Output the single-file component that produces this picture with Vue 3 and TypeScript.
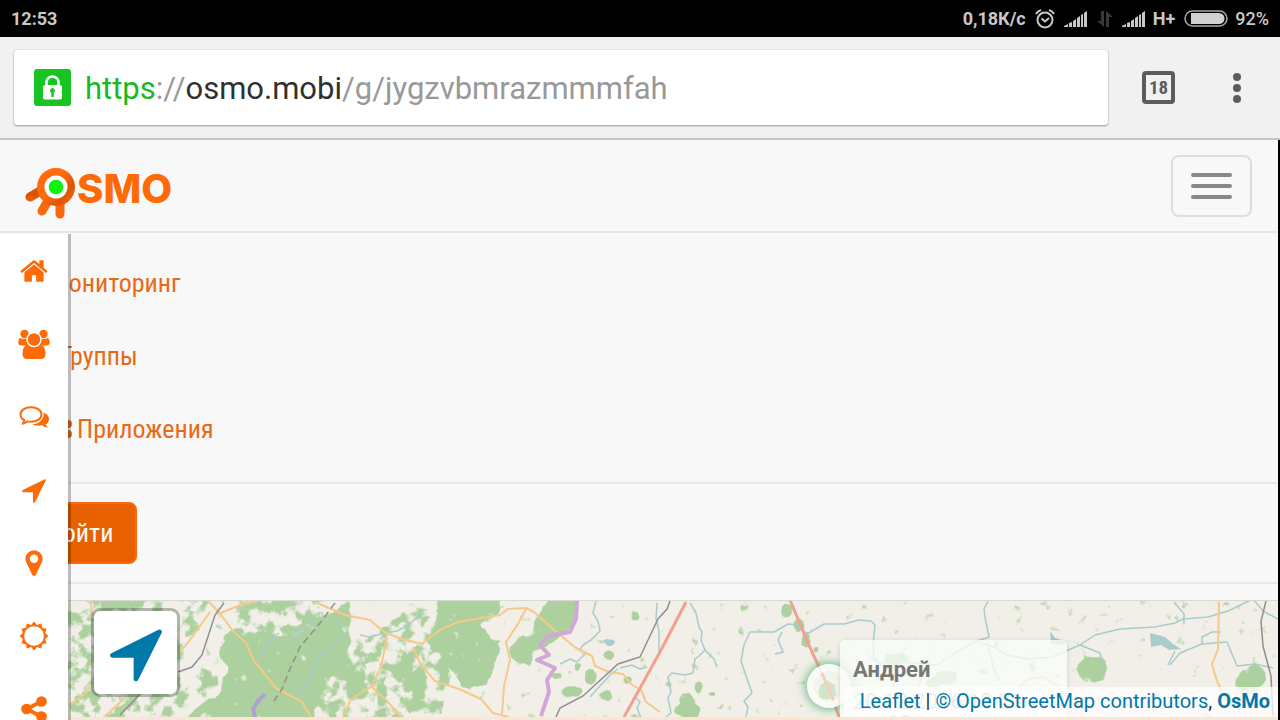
<script setup lang="ts">
interface SideItem {
  label: string
  kind: 'home' | 'users' | 'comments' | 'arrow' | 'marker' | 'sun' | 'share'
}

const sideItems: SideItem[] = [
  { label: 'Главная', kind: 'home' },
  { label: 'Участники', kind: 'users' },
  { label: 'Чат', kind: 'comments' },
  { label: 'Треки', kind: 'arrow' },
  { label: 'Точки', kind: 'marker' },
  { label: 'Настройки', kind: 'sun' },
  { label: 'Поделиться', kind: 'share' },
]

const arrowPath =
  'M1593 349l-640 1280q-17 35-57 35-5 0-15-2-22-5-35.5-22.5t-13.5-39.5v-576h-576q-22 0-39.5-13.5t-22.5-35.5 4-42 29-30l1280-640q13-7 29-7 27 0 45 19 15 14 18.5 34.5t-6.5 39.5z'

const iconPaths: Record<string, string> = {
  home: 'M1472 992v480q0 26-19 45t-45 19h-384v-384h-256v384h-384q-26 0-45-19t-19-45v-480q0-1 .5-3t.5-3l575-474 575 474q1 2 1 6zm223-69l-62 74q-8 9-21 11h-3q-13 0-21-7l-692-577-692 577q-12 8-24 7-13-2-21-11l-62-74q-8-10-7-23.5t11-21.5l719-599q32-26 76-26t76 26l244 204v-195q0-14 9-23t23-9h192q14 0 23 9t9 23v408l219 182q10 8 11 21.5t-7 23.5z',
  arrow: arrowPath,
  marker:
    'M1152 640q0-106-75-181t-181-75-181 75-75 181 75 181 181 75 181-75 75-181zm256 0q0 109-33 179l-364 774q-16 33-47.5 52t-67.5 19-67.5-19-46.5-52l-365-774q-33-70-33-179 0-212 150-362t362-150 362 150 150 362z',
  share:
    'M1344 1024q133 0 226.5 93.5t93.5 226.5-93.5 226.5-226.5 93.5-226.5-93.5-93.5-226.5q0-12 2-34l-360-180q-92 86-218 86-133 0-226.5-93.5t-93.5-226.5 93.5-226.5 226.5-93.5q126 0 218 86l360-180q-2-22-2-34 0-133 93.5-226.5t226.5-93.5 226.5 93.5 93.5 226.5-93.5 226.5-226.5 93.5q-126 0-218-86l-360 180q2 22 2 34t-2 34l360 180q92-86 218-86z',
}

function sunPoints(): string {
  const points: string[] = []
  for (let i = 0; i < 24; i++) {
    const radius = i % 2 === 0 ? 14.5 : 11.5
    const angle = (i * Math.PI) / 12
    points.push(`${(16 + radius * Math.sin(angle)).toFixed(2)},${(16 - radius * Math.cos(angle)).toFixed(2)}`)
  }
  return points.join(' ')
}
const sun = sunPoints()

const groves: number[][] = [
  [556, 676, 6, 4], [609, 655, 7, 4], [590, 676, 5, 9], [578, 667, 3, 5], [573, 691, 10, 5],
  [606, 696, 6, 7], [628, 680, 4, 4], [634, 615, 4, 5], [687, 711, 13, 8], [686, 700, 7, 8],
  [699, 687, 4, 7], [712, 694, 4, 2], [788, 611, 6, 7], [799, 625, 6, 7], [806, 640, 4, 8],
  [816, 650, 3, 3], [827, 690, 8, 10], [1091, 671, 14, 13], [1098, 664, 7, 8], [1253, 677, 14, 11],
  [1243, 683, 8, 7], [896, 659, 13, 6], [946, 677, 12, 7], [934, 683, 8, 5],
]
</script>

<template>
  <div class="screen">
    <header class="status">
      <span>12:53</span>
      <div class="status-right">
        <span>0,18К/с</span>
        <svg width="20" height="20" viewBox="0 0 20 20" fill="none" stroke="#c8c8c8" stroke-width="2">
          <circle cx="10" cy="11" r="7.5" />
          <path d="M6.5 9.5l3.5 3 4-3.5M1 5a8 8 0 0 1 5-4M19 5a8 8 0 0 0-5-4" />
        </svg>
        <svg width="24" height="17" viewBox="0 0 24 17" fill="#c8c8c8">
          <path d="M0 17v-1l4-2v3zM5 17v-4l3-1v5zM9 17V11l3-2v8zM13 17V8l3-2v11zM17 17V5l2-1v13zM20 17V3l3-2v16z" />
        </svg>
        <svg width="16" height="16" viewBox="0 0 16 16" fill="#383838">
          <path d="M4 0h3v16L0 10h4zM9 16V0l7 6h-4v10z" />
        </svg>
        <svg width="24" height="17" viewBox="0 0 24 17" fill="#c8c8c8">
          <path d="M0 17v-1l4-2v3zM5 17v-4l3-1v5zM9 17V11l3-2v8zM13 17V8l3-2v11zM17 17V5l2-1v13zM20 17V3l3-2v16z" />
        </svg>
        <span>H+</span>
        <svg width="44" height="18" viewBox="0 0 44 18">
          <rect x="1" y="1" width="42" height="15" rx="7.5" fill="none" stroke="#a8a8a8" stroke-width="1.5" />
          <path d="M7 3h28a5.500 5.500 0 0 1 0 11H7z" fill="#d0d0d0" />
        </svg>
        <span class="battery">92%</span>
      </div>
    </header>

    <div class="browser">
      <div class="address">
        <svg class="lock" width="37" height="37" viewBox="0 0 37 37">
          <rect width="37" height="37" rx="3" fill="#18c422" />
          <path d="M12.500 18v-4.500a6 6 0 0 1 12 0V18" fill="none" stroke="#fff" stroke-width="2.500" />
          <rect x="9" y="16" width="19" height="14.500" rx="2" fill="#fff" />
          <path d="M18.500 19a2.600 2.600 0 0 1 1.200 4.800V28h-2.400v-4.200A2.600 2.600 0 0 1 18.500 19z" fill="#18c422" />
        </svg>
        <span class="url"><span class="scheme">https</span>://<span class="host">osmo.mobi</span>/g/jygzvbmrazmmmfah</span>
      </div>
      <button class="tabs" type="button" aria-label="Вкладки">18</button>
      <button class="more" type="button" aria-label="Меню">
        <svg width="10" height="32" viewBox="0 0 10 32" fill="#5c5c5c">
          <circle cx="5" cy="5" r="4" /><circle cx="5" cy="16" r="4" /><circle cx="5" cy="27" r="4" />
        </svg>
      </button>
    </div>

    <div class="page">
      <div class="navbar">
        <a class="brand" href="#" aria-label="OsMo">
          <svg width="148" height="56" viewBox="0 0 148 56">
            <defs>
              <linearGradient id="leg" gradientUnits="userSpaceOnUse" x1="0" y1="30" x2="0" y2="50">
                <stop offset="0" stop-color="#d95200" /><stop offset="0.600" stop-color="#fb6a0a" />
              </linearGradient>
              <linearGradient id="ring" x1="0" y1="0" x2="1" y2="0.800">
                <stop offset="0.500" stop-color="#fd6b0b" /><stop offset="0.800" stop-color="#dc5605" />
                <stop offset="1" stop-color="#f7680b" />
              </linearGradient>
            </defs>
            <g stroke="url(#leg)" stroke-width="9" stroke-linecap="round" fill="none">
              <path d="M18 26L6 33" /><path d="M25 35L18 47" /><path d="M36 36L36 50" />
            </g>
            <circle cx="32" cy="23" r="19" fill="url(#ring)" />
            <circle cx="32" cy="23" r="11.500" fill="#fff" />
            <circle cx="32" cy="23" r="7.300" fill="#0cf410" />
            <text x="53" y="39" class="logo-text">SMO</text>
          </svg>
        </a>
        <button class="toggle" type="button" aria-label="Навигация"><i></i><i></i><i></i></button>
      </div>

      <div class="content">
        <nav class="menu">
          <a class="first" href="#">Мониторинг</a>
          <a class="second" href="#">Группы</a>
          <a class="third" href="#">
            <svg width="24" height="20" viewBox="0 0 24 20" fill="none" stroke="#e86a14" stroke-width="4">
              <circle cx="8" cy="11" r="6" /><circle cx="20" cy="5" r="2" /><circle cx="20" cy="15" r="2" />
            </svg>
            Приложения
          </a>
        </nav>
        <div class="login"><button type="button">Войти</button></div>

        <main class="map">
          <svg class="tiles" viewBox="0 600 1278 117" preserveAspectRatio="xMinYMin slice">
            <defs>
              <filter id="woods" x="0" y="590" width="1278" height="130" filterUnits="userSpaceOnUse" color-interpolation-filters="sRGB">
                <feTurbulence type="fractalNoise" baseFrequency="0.080" numOctaves="4" seed="7" result="n" />
                <feGaussianBlur in="SourceGraphic" stdDeviation="1.500" result="s" />
                <feComposite in="s" in2="n" operator="arithmetic" k2="0.600" k3="1" k4="-0.280" />
                <feComponentTransfer result="t"><feFuncA type="linear" slope="6" intercept="-2.600" /></feComponentTransfer>
                <feFlood flood-color="#add19e" />
                <feComposite in2="t" operator="in" />
              </filter>
            </defs>
            <rect y="600" width="1278" height="117" fill="#f1efe8" />
            <g filter="url(#woods)">
              <g opacity="0.450">
                <path d="M60 596H212L200 625 180 650 182 690 140 720H60z" />
                <path d="M218 596H340L300 638 235 625z" />
                <path d="M400 615L450 596 500 650 450 680 440 720H310L330 665z" />
                <path d="M182 690L200 665 225 660 215 690 165 720 140 720z" />
              </g>
              <path d="M105 596h38v12h-38zM220 640l15-12 60 10 25-20 30-16 0 38 -5 20-22 30-14 40H170l25-20 25-18 8-25-10-15z" />
              <path d="M443 596H500L499 615 481 625 501 650 486 685 462 688 448 662 430 645z" />
              <path d="M550 596H578L573 627 555 640 533 652 531 666 512 659 508 648 530 632z" />
              <path d="M340 660l25 3 0 24-12 10-20-12zM390 670l20-15 20 25-15 25z" opacity="0.700" />
              <ellipse v-for="(g, i) in groves" :key="i" :cx="g[0]" :cy="g[1]" :rx="g[2]" :ry="g[3]" />
            </g>

            <g fill="none" stroke="#a9cbcb" stroke-width="1.500" stroke-linejoin="round">
              <path d="M360 635l10 2 15-4 12-2 13-7 12-12M262 653l7-12 10-8M300 694l14-21 3-14 15-12 14-15M315 615l-18 20-7 6" stroke="#a8cdd4" />
              <path d="M596 601l-3 12 5 8 2 10-9 9-8 5-4 6M560 664l10-5 7 3 8-8M657 603l-1 16 3 12 0 24" />
              <path d="M690 603l6 10 3 14 3 5-1 8 4 10-6 6-4 3-2 14-8 2-13-2-4 4 3 15-3 6 3 15-5 4M705 650l9 9 3 8M620 668l12-3 8 4 7-2M590 697l20-22 8-6M635 697l5 5-3 6 4 10" />
              <path d="M746 717l2-10-4-6 8-8-7-20-4-12 3-16 6-13 24 0 14-8 10 1 9 9 17-10 20 0 15-4 12 1 4 4-2 20 1 12 7 9 9 1M782 632l-4 8 5 12-8 2" />
              <path d="M870 657l8 6 22-1 37 3 15-10 22-13 15-5-4-20-1-8 4-8M980 643l10 2 17 10 20 4 25-2 28-12 15-10 25-6 35-2 20-4 8-4 25-2 20-6 25-12 10 12 15 8 9 2 10-2M988 645l6 24 5 10M1174 602l10 12 0 10" />
              <path d="M1170 665l10-12 22-9 25-2 5 12 5 12 18-2 18 4M1202 644l0-7 10-5 9 0M1080 645l20 8 4 13M1175 651l-7 14" />
            </g>
            <path d="M1050 631l5 7 12 4-5 3-11-1zM1150 633l15 4 8 7 8 5-12 1-8-5-10 2zM606 639a5 4 0 1 0 8 1zM978 670l7-2 4 4-7 3zM1029 664l5-2 2 8-5 2z" fill="#a8cccd" />

            <g fill="none" stroke="#f5c98a" stroke-width="2" stroke-linejoin="round">
              <path d="M208 601l10 10 15 20 13 12 8 18 22 27 26 14 10 17M210 612l-20 28-10 12M218 614l20-8 20-5M70 704l15-10 5-8M90 600l3 16M105 716l20-18" />
              <path d="M315 602l30 13 25 5 14 12 15 6 23 6 18-14 18-8 42-7 8-6 18-1 8 4 20 18 22 18 16 8 3 10 14 6 14 2 8 10 10 6 5 12 14 10" />
              <path d="M387 637l-6 30-10 20-20 12-8 18M372 687l15 14 14 16M413 647l8 18 14 16 24 8 22 10 12 14 16 4M526 609l-8 15-12 18 4 18-6 26-2 28" />
              <path d="M1219 602l-1 47-6 15 5 17 10 20M1018 687l10-8 16-2 14 9" />
            </g>
            <g fill="none" stroke="#8f8f8d" stroke-width="1.500">
              <path d="M224 603l-9 12-13 40-10 12-14 5M144 690l-24 25M670 601l-3 8-9 10-18 38-22 7-35 32-23 12-4 9M1266 601l-5 20 2 25 8 30 2 40" />
              <path d="M335 603l-15 20-20 24-10 22-8 20-8 12" stroke-dasharray="7 4" />
            </g>
            <path d="M577 601l-1 18-6 13-22 4-8 9 9 10-12 5 18 8-8 12 2 12-8 24" fill="none" stroke="#d3a6d8" stroke-width="4" stroke-linejoin="round" />
            <path d="M265 694l-7 7-5 8 2 8" fill="none" stroke="#b0a0cf" stroke-width="4" />
            <path d="M686 602l-26 50-36 65M790 600l18 43 22 48 9 26" fill="none" stroke="#f3a08e" stroke-width="3" />
            <rect y="600" width="1278" height="1" fill="#d8d8d5" />
          </svg>

          <button class="locate" type="button" aria-label="Моё местоположение">
            <svg width="66" height="66" viewBox="0 0 1792 1792" fill="#0078a8"><path :d="arrowPath" /></svg>
          </button>
          <div class="pin"></div>
          <div class="tip"><strong>Андрей</strong><span>20:12:2016 19:21</span><span class="speed">12</span></div>
          <div class="attribution">
            <a href="#">Leaflet</a> | <a href="#">© OpenStreetMap contributors</a>, <a href="#"><b>OsMo</b></a>
          </div>
        </main>
        <div class="strip"></div>

        <aside class="sidebar">
          <a v-for="item in sideItems" :key="item.kind" href="#" :aria-label="item.label">
            <svg v-if="iconPaths[item.kind]" width="30" height="30" viewBox="0 0 1792 1792">
              <path :d="iconPaths[item.kind]" />
            </svg>
            <svg v-else-if="item.kind === 'users'" width="32" height="32" viewBox="0 0 32 32">
              <circle cx="6.500" cy="6" r="4.200" /><circle cx="25.500" cy="6" r="4.200" />
              <path d="M2 10q4 2 7 .3-.6 5 2.500 7.200H4q-4 0-3.700-3.500Q.5 11 2 10zM30 10q-4 2-7 .3.600 5-2.500 7.200H28q4 0 3.700-3.500-.200-3-1.700-4z" />
              <circle cx="16" cy="11.500" r="7" stroke="#fff" stroke-width="1.500" />
              <path d="M10 17q6 4.500 12 0 5.500 0 5.500 9 0 5-5 5h-13q-5 0-5-5 0-9 5.500-9z" />
            </svg>
            <svg v-else-if="item.kind === 'comments'" width="32" height="32" viewBox="0 0 32 32">
              <path d="M13 6.200c6.200 0 10.500 3.200 10.500 7.300S19.200 20.800 13 20.800q-1.800 0-3.500-.400-2 1.500-4.500 2l1.300-3.200q-3.800-2.200-3.800-5.700C2.500 9.400 6.800 6.200 13 6.200z" fill="none" stroke="#fd6a06" stroke-width="2" />
              <path d="M25.500 11.500q5.500 2.200 5.500 6.500 0 3.300-3.200 5.300.5 1.700 2 3.200-3 0-5.800-2.200-5.500 1.200-9.800-1.100 9.800-.8 11.300-8.200.4-1.700 0-3.500z" />
            </svg>
            <svg v-else width="32" height="32" viewBox="0 0 32 32">
              <path :d="`M${sun}z M16 6.200a9.800 9.800 0 1 0 .01 0z`" fill-rule="evenodd" />
            </svg>
          </a>
        </aside>
      </div>
    </div>
  </div>
</template>

<style>
html, body { margin: 0; background: #000; overflow: hidden; }
</style>

<style scoped>
.screen { display: flex; flex-direction: column; height: 100vh; overflow: hidden; font-family: Roboto, "Noto Sans", sans-serif; background: #000; }
button { font: inherit; padding: 0; margin: 0; box-sizing: border-box; }
a { text-decoration: none; }
svg { display: block; flex: none; }
.status { flex: none; display: flex; align-items: center; justify-content: space-between; height: 37px; padding: 0 11px; color: #c8c8c8; font-size: 18px; font-weight: 700; }
.status-right { display: flex; align-items: center; gap: 7px; }
.status-right svg { margin-left: 2px; }
.battery { font-weight: 500; }
.browser { flex: none; display: flex; align-items: center; height: 103px; box-sizing: border-box; padding: 0 38px 0 14px; background: #f1f1f1; border-bottom: 2px solid #c4c4c4; }
.address { flex: 1; display: flex; align-items: center; height: 75px; padding-left: 20px; background: #fff; border-radius: 3px; box-shadow: 0 1px 2px #999, 0 0 1px #aaa; }
.url { margin-left: 14px; padding-top: 3px; color: #999; font-size: 31px; line-height: 40px; white-space: nowrap; }
.scheme { color: #18b826; }
.host { color: #303030; }
.tabs { width: 33px; height: 33px; margin-left: 34px; border: 4px solid #5c5c5c; border-radius: 4px; background: transparent; color: #5c5c5c; font-family: "Roboto Condensed", Roboto, sans-serif; font-size: 19px; font-weight: 700; line-height: 24px; }
.more { margin-left: 57px; border: 0; background: transparent; }
.page { flex: 1; min-height: 0; margin-right: 2px; display: flex; flex-direction: column; background: #f8f8f8; }
.navbar { flex: none; display: flex; align-items: center; justify-content: space-between; height: 93px; box-sizing: border-box; padding: 0 26px 0 24px; border-bottom: 2px solid #e7e7e7; }
.brand { margin-top: 12px; }
.logo-text { font-family: Inter, sans-serif; font-weight: 800; font-size: 40px; fill: #fd6a06; }
.toggle { width: 81px; height: 62px; display: flex; flex-direction: column; align-items: center; justify-content: center; gap: 7px; border: 2px solid #ddd; border-radius: 8px; background: transparent; }
.toggle i { width: 41px; height: 4px; border-radius: 2px; background: #888; }
.content { position: relative; flex: 1; min-height: 0; overflow: hidden; }
.menu { display: flex; flex-direction: column; padding: 13px 0 17px; border-bottom: 2px solid #e7e7e7; font-family: "Roboto Condensed", "Liberation Sans Narrow", "Roboto", sans-serif; }
.menu a { display: flex; align-items: center; gap: 5px; height: 73px; color: #e86a14; font-size: 26px; }
.menu .first { padding-left: 49px; }
.menu .second { padding-left: 60px; }
.menu .third { padding-left: 48px; }
.login { padding: 18px 28px; border-bottom: 2px solid #e7e7e7; }
.login button { display: block; width: 109px; height: 62px; padding-right: 3px; border: 2px solid #fd6a06; border-radius: 8px; background: #e86000; color: #fff; font-family: "Roboto Condensed", "Liberation Sans Narrow", "Roboto", sans-serif; font-size: 26px; }
.map { position: relative; height: 117px; margin-top: 16px; overflow: hidden; background: #f1efe8; }
.tiles { width: 100%; height: 100%; }
.locate { position: absolute; left: 91px; top: 8px; width: 89px; height: 89px; display: flex; align-items: center; justify-content: center; border: 3px solid rgba(0, 0, 0, 0.25); border-radius: 9px; background: #fff; background-clip: padding-box; }
.pin { position: absolute; left: 807px; top: 64px; width: 30px; height: 30px; border: 7px solid rgba(250, 252, 248, 0.85); border-radius: 50%; background: rgba(245, 250, 240, 0.5); box-shadow: 0 0 9px 2px rgba(70, 170, 100, 0.7); }
.tip { position: absolute; left: 840px; top: 40px; width: 214px; height: 90px; padding: 14px 0 0 13px; border-radius: 5px; background: rgba(250, 253, 248, 0.78); box-shadow: 0 1px 5px rgba(0, 0, 0, 0.15); color: #777; font-size: 22px; line-height: 32px; }
.tip strong, .tip span { display: block; }
.tip span { color: #bbb; }
.tip .speed { padding-left: 34px; line-height: 12px; }
.attribution { position: absolute; right: 0; bottom: 0; padding: 0 8px 0 16px; height: 30px; background: rgba(255, 255, 255, 0.75); color: #333; font-size: 20px; line-height: 28px; white-space: nowrap; }
.attribution a { color: #0078a8; }
.strip { height: 30px; background: #fbe6d6; }
.sidebar { position: absolute; left: 0; top: 1px; width: 68px; display: flex; flex-direction: column; background: #fff; background-clip: padding-box; border-right: 3px solid rgba(0, 0, 0, 0.24); }
.sidebar a { height: 73px; display: flex; align-items: center; justify-content: center; }
.sidebar svg { fill: #fd6a06; }
</style>
